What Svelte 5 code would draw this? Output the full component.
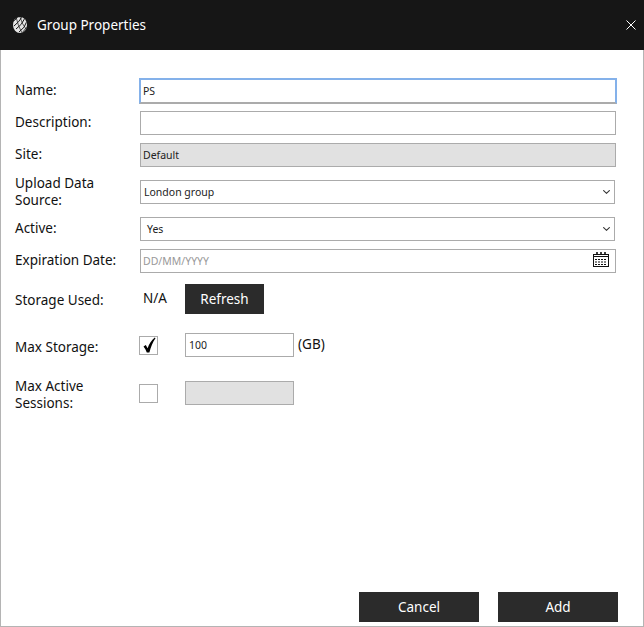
<script>
  let name = $state("PS");
  let description = $state("");
  let maxStorageOn = $state(true);
  let maxSessionsOn = $state(false);
  let maxStorage = $state("100");
</script>

<div class="dialog">
  <header class="title-bar">
    <svg class="logo" width="14" height="16" viewBox="0 0 14 16">
      <defs>
        <clipPath id="globe"><ellipse cx="7" cy="8" rx="7" ry="8" /></clipPath>
      </defs>
      <ellipse cx="7" cy="8" rx="7" ry="8" fill="#e4e4e4" />
      <g clip-path="url(#globe)" stroke="#161616" fill="none">
        <path d="M0 5 L5 0" stroke-width="0.9" />
        <path d="M1 9 Q6 5 9 0" stroke-width="1" />
        <path d="M3 12 Q9 8 12 1" stroke-width="1" />
        <path d="M6 15 Q12 11 14 4" stroke-width="1" />
        <path d="M9 16 L14 10" stroke-width="0.9" />
        <path d="M3 0 Q5 9 9 16" stroke-width="0.7" />
        <path d="M7 0 Q9 7 13 12" stroke-width="0.7" />
      </g>
    </svg>
    <span class="title">Group Properties</span>
    <button class="close" aria-label="Close">
      <svg width="10" height="10" viewBox="0 0 10 10">
        <path d="M0.5 0.5 L9.5 9.5 M9.5 0.5 L0.5 9.5" stroke="#fff" stroke-width="1" fill="none" />
      </svg>
    </button>
  </header>

  <div class="form">
    <div class="row name-row">
      <label class="up" for="name">Name:</label>
      <input id="name" class="field focused" type="text" bind:value={name} />
    </div>
    <div class="row desc-row">
      <label class="up" for="desc">Description:</label>
      <input id="desc" class="field" type="text" bind:value={description} />
    </div>
    <div class="row site-row">
      <label class="up" for="site">Site:</label>
      <input id="site" class="field" type="text" value="Default" disabled />
    </div>
    <div class="row upload-row">
      <label for="source">Upload Data Source:</label>
      <div id="source" class="field select">
        <span>London group</span>
        <svg width="7" height="4" viewBox="0 0 7 4"><path d="M0.3 0.3 L3.5 3.3 L6.7 0.3" stroke="#333" stroke-width="1.1" fill="none" /></svg>
      </div>
    </div>
    <div class="row active-row">
      <label class="up" for="active">Active:</label>
      <div id="active" class="field select yes">
        <span>Yes</span>
        <svg width="7" height="4" viewBox="0 0 7 4"><path d="M0.3 0.3 L3.5 3.3 L6.7 0.3" stroke="#333" stroke-width="1.1" fill="none" /></svg>
      </div>
    </div>
    <div class="row date-row">
      <label class="up" for="expires">Expiration Date:</label>
      <div class="date-wrap">
        <input id="expires" class="field" type="text" placeholder="DD/MM/YYYY" />
        <svg class="calendar" width="16" height="15" viewBox="0 0 16 15" fill="none" stroke="#111">
          <rect x="0.5" y="2.5" width="15" height="12" />
          <path d="M0.5 4.5 H15.5" />
          <path d="M4 0 V3 M8 0 V3 M12 0 V3" stroke-width="1.6" />
          <path d="M2 7.5 H14 M2 10 H14 M2 12.5 H14" stroke-dasharray="2 1" />
        </svg>
      </div>
    </div>
    <div class="row storage-row">
      <span class="label down">Storage Used:</span>
      <span class="value">N/A</span>
      <button class="dark refresh">Refresh</button>
    </div>
    <div class="row max-row">
      <label class="down-more" for="max-storage">Max Storage:</label>
      <button class="check" aria-label="Max Storage" onclick={() => (maxStorageOn = !maxStorageOn)}>
        {#if maxStorageOn}
          <svg width="14" height="16" viewBox="0 0 14 16"><path d="M1.5 9.5 L3.8 8 L5.6 11.2 C7.2 7 9.4 3.4 12.8 0.6 L13.5 1.2 C10.8 5 8.8 10 7.4 15.6 L4.8 15.6 C4 13.2 2.9 11.2 1.5 9.5 Z" fill="#000" /></svg>
        {/if}
      </button>
      <input id="max-storage" class="field short" type="text" bind:value={maxStorage} />
      <span class="unit">(GB)</span>
    </div>
    <div class="row sessions-row">
      <label class="down-some" for="max-sessions">Max Active Sessions:</label>
      <button class="check" aria-label="Max Active Sessions" onclick={() => (maxSessionsOn = !maxSessionsOn)}></button>
      <input id="max-sessions" class="field short" type="text" disabled />
    </div>
  </div>

  <footer class="actions">
    <button class="dark wide">Cancel</button>
    <button class="dark wide">Add</button>
  </footer>
</div>

<style>
  :global(body) {
    margin: 0;
    background: #fff;
  }

  .dialog {
    width: 644px;
    height: 627px;
    box-sizing: border-box;
    display: flex;
    flex-direction: column;
    border: 1px solid #b4b4b4;
    border-top: none;
    font-family: "Noto Sans", "Open Sans", sans-serif;
    color: #111;
  }

  .title-bar {
    height: 50px;
    margin: 0 -1px;
    padding: 0 8px 0 13px;
    flex: none;
    display: flex;
    align-items: center;
    background: #161616;
    color: #fff;
  }

  .logo {
    margin-right: 10px;
  }

  .title {
    font-size: 13.5px;
  }

  .close {
    margin-left: auto;
    padding: 0;
    border: none;
    background: none;
    display: flex;
  }

  .form {
    flex: 1;
    padding: 28px 27px 0 14px;
    display: flex;
    flex-direction: column;
  }

  .row {
    height: 24px;
    display: flex;
    align-items: center;
  }

  label,
  .label {
    width: 125px;
    flex: none;
    font-size: 13.5px;
    line-height: 17px;
  }

  .up {
    margin-top: -2px;
  }

  .down {
    margin-top: 2px;
  }

  .down-some {
    margin-top: 4px;
  }

  .down-more {
    margin-top: 5px;
  }

  .field {
    flex: 1;
    min-width: 0;
    height: 24px;
    box-sizing: border-box;
    padding: 0 2px;
    border: 1px solid #ababab;
    border-radius: 0;
    outline: none;
    background: #fff;
    font-family: inherit;
    font-size: 10.5px;
    color: #222;
  }

  .field::placeholder {
    color: #999;
  }

  .field:disabled {
    background: #e1e1e1;
    color: #222;
  }

  .focused {
    height: 26px;
    margin: 0 -1px 0 -1px;
    border: 2px solid #84b1ea;
    border-bottom-color: #ababab;
    padding-left: 2px;
  }

  .name-row {
    height: 26px;
  }

  .desc-row {
    margin-top: 7px;
  }

  .site-row {
    margin-top: 8px;
  }

  .upload-row {
    margin-top: 13px;
  }

  .active-row {
    margin-top: 13px;
  }

  .date-row {
    margin-top: 8px;
  }

  .select {
    display: flex;
    align-items: center;
    justify-content: space-between;
    margin-right: 1px;
    padding: 0 4px 0 3px;
  }

  .select.yes {
    padding-left: 6px;
  }

  .date-wrap {
    flex: 1;
    display: flex;
    position: relative;
  }

  .calendar {
    position: absolute;
    right: 7px;
    top: 3px;
  }

  .storage-row {
    margin-top: 11px;
    height: 30px;
  }

  .value {
    width: 42px;
    padding-left: 3px;
    font-size: 13.5px;
    margin-bottom: 3px;
  }

  .dark {
    border: none;
    background: #2b2b2b;
    color: #fff;
    font-family: inherit;
    font-size: 13.5px;
    padding: 0;
  }

  .refresh {
    width: 79px;
    height: 30px;
  }

  .max-row {
    margin-top: 19px;
  }

  .check {
    width: 19px;
    height: 19px;
    flex: none;
    box-sizing: border-box;
    margin: 0 27px 0 -1px;
    padding: 0;
    border: 1px solid #ababab;
    background: #fff;
    display: flex;
    align-items: center;
    justify-content: center;
  }

  .short {
    flex: none;
    width: 109px;
    padding-left: 3px;
  }

  .unit {
    margin: 0 0 3px 4px;
    font-size: 13.5px;
  }

  .sessions-row {
    margin-top: 24px;
  }

  .actions {
    flex: none;
    display: flex;
    justify-content: flex-end;
    gap: 19px;
    padding: 0 25px 4px 0;
  }

  .wide {
    width: 120px;
    height: 30px;
  }
</style>
